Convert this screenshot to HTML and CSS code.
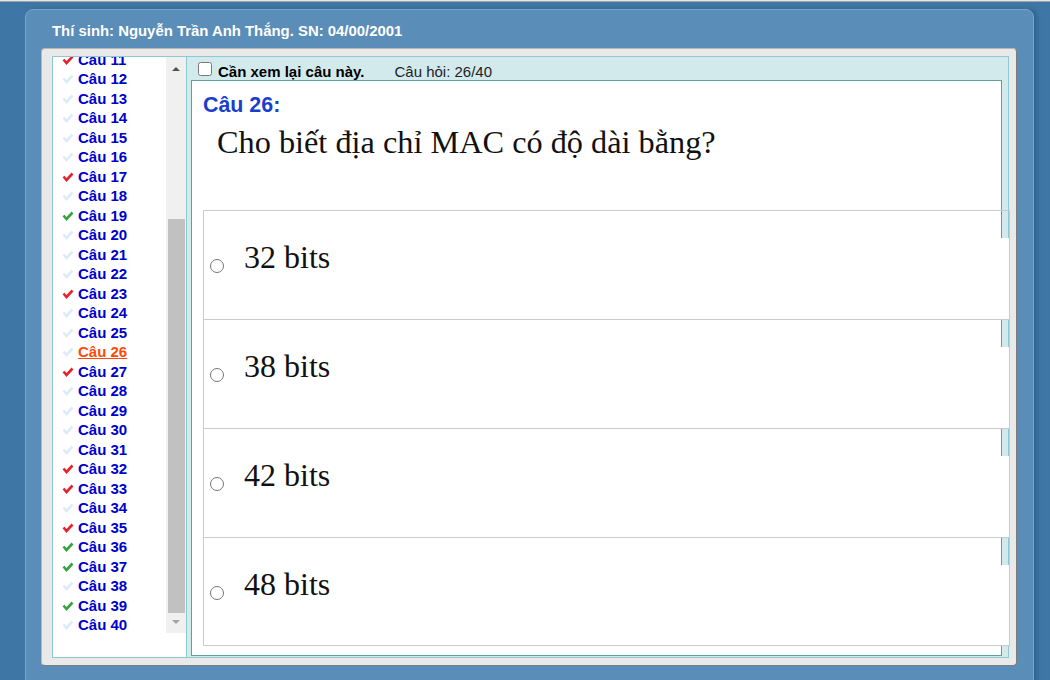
FILE: index.html
```html
<!DOCTYPE html>
<html lang="vi">
<head>
<meta charset="utf-8">
<title>Thi trắc nghiệm</title>
<link rel="stylesheet" href="styles.css">
</head>
<body>
<div class="topline"></div>
<div class="page">
  <div class="header">Thí sinh: Nguyễn Trần Anh Thắng. SN: 04/00/2001</div>
  <div class="frame">
    <div class="nav">
      <div class="nav-scroll">
        <div class="qlist-wrap">
          <ul class="qlist">
            <li class="q"><svg class="tick red" viewBox="0 0 12 10"><path d="M1.5 4.5 L4.5 8 L10.5 1.5"/></svg><a class="ql">Câu 11</a></li>
            <li class="q"><svg class="tick none" viewBox="0 0 12 10"><path d="M1.5 4.5 L4.5 8 L10.5 1.5"/></svg><a class="ql">Câu 12</a></li>
            <li class="q"><svg class="tick none" viewBox="0 0 12 10"><path d="M1.5 4.5 L4.5 8 L10.5 1.5"/></svg><a class="ql">Câu 13</a></li>
            <li class="q"><svg class="tick none" viewBox="0 0 12 10"><path d="M1.5 4.5 L4.5 8 L10.5 1.5"/></svg><a class="ql">Câu 14</a></li>
            <li class="q"><svg class="tick none" viewBox="0 0 12 10"><path d="M1.5 4.5 L4.5 8 L10.5 1.5"/></svg><a class="ql">Câu 15</a></li>
            <li class="q"><svg class="tick none" viewBox="0 0 12 10"><path d="M1.5 4.5 L4.5 8 L10.5 1.5"/></svg><a class="ql">Câu 16</a></li>
            <li class="q"><svg class="tick red" viewBox="0 0 12 10"><path d="M1.5 4.5 L4.5 8 L10.5 1.5"/></svg><a class="ql">Câu 17</a></li>
            <li class="q"><svg class="tick none" viewBox="0 0 12 10"><path d="M1.5 4.5 L4.5 8 L10.5 1.5"/></svg><a class="ql">Câu 18</a></li>
            <li class="q"><svg class="tick green" viewBox="0 0 12 10"><path d="M1.5 4.5 L4.5 8 L10.5 1.5"/></svg><a class="ql">Câu 19</a></li>
            <li class="q"><svg class="tick none" viewBox="0 0 12 10"><path d="M1.5 4.5 L4.5 8 L10.5 1.5"/></svg><a class="ql">Câu 20</a></li>
            <li class="q"><svg class="tick none" viewBox="0 0 12 10"><path d="M1.5 4.5 L4.5 8 L10.5 1.5"/></svg><a class="ql">Câu 21</a></li>
            <li class="q"><svg class="tick none" viewBox="0 0 12 10"><path d="M1.5 4.5 L4.5 8 L10.5 1.5"/></svg><a class="ql">Câu 22</a></li>
            <li class="q"><svg class="tick red" viewBox="0 0 12 10"><path d="M1.5 4.5 L4.5 8 L10.5 1.5"/></svg><a class="ql">Câu 23</a></li>
            <li class="q"><svg class="tick none" viewBox="0 0 12 10"><path d="M1.5 4.5 L4.5 8 L10.5 1.5"/></svg><a class="ql">Câu 24</a></li>
            <li class="q"><svg class="tick none" viewBox="0 0 12 10"><path d="M1.5 4.5 L4.5 8 L10.5 1.5"/></svg><a class="ql">Câu 25</a></li>
            <li class="q"><svg class="tick none" viewBox="0 0 12 10"><path d="M1.5 4.5 L4.5 8 L10.5 1.5"/></svg><a class="ql current">Câu 26</a></li>
            <li class="q"><svg class="tick red" viewBox="0 0 12 10"><path d="M1.5 4.5 L4.5 8 L10.5 1.5"/></svg><a class="ql">Câu 27</a></li>
            <li class="q"><svg class="tick none" viewBox="0 0 12 10"><path d="M1.5 4.5 L4.5 8 L10.5 1.5"/></svg><a class="ql">Câu 28</a></li>
            <li class="q"><svg class="tick none" viewBox="0 0 12 10"><path d="M1.5 4.5 L4.5 8 L10.5 1.5"/></svg><a class="ql">Câu 29</a></li>
            <li class="q"><svg class="tick none" viewBox="0 0 12 10"><path d="M1.5 4.5 L4.5 8 L10.5 1.5"/></svg><a class="ql">Câu 30</a></li>
            <li class="q"><svg class="tick none" viewBox="0 0 12 10"><path d="M1.5 4.5 L4.5 8 L10.5 1.5"/></svg><a class="ql">Câu 31</a></li>
            <li class="q"><svg class="tick red" viewBox="0 0 12 10"><path d="M1.5 4.5 L4.5 8 L10.5 1.5"/></svg><a class="ql">Câu 32</a></li>
            <li class="q"><svg class="tick red" viewBox="0 0 12 10"><path d="M1.5 4.5 L4.5 8 L10.5 1.5"/></svg><a class="ql">Câu 33</a></li>
            <li class="q"><svg class="tick none" viewBox="0 0 12 10"><path d="M1.5 4.5 L4.5 8 L10.5 1.5"/></svg><a class="ql">Câu 34</a></li>
            <li class="q"><svg class="tick red" viewBox="0 0 12 10"><path d="M1.5 4.5 L4.5 8 L10.5 1.5"/></svg><a class="ql">Câu 35</a></li>
            <li class="q"><svg class="tick green" viewBox="0 0 12 10"><path d="M1.5 4.5 L4.5 8 L10.5 1.5"/></svg><a class="ql">Câu 36</a></li>
            <li class="q"><svg class="tick green" viewBox="0 0 12 10"><path d="M1.5 4.5 L4.5 8 L10.5 1.5"/></svg><a class="ql">Câu 37</a></li>
            <li class="q"><svg class="tick none" viewBox="0 0 12 10"><path d="M1.5 4.5 L4.5 8 L10.5 1.5"/></svg><a class="ql">Câu 38</a></li>
            <li class="q"><svg class="tick green" viewBox="0 0 12 10"><path d="M1.5 4.5 L4.5 8 L10.5 1.5"/></svg><a class="ql">Câu 39</a></li>
            <li class="q"><svg class="tick none" viewBox="0 0 12 10"><path d="M1.5 4.5 L4.5 8 L10.5 1.5"/></svg><a class="ql">Câu 40</a></li>
          </ul>
        </div>
        <div class="sbar">
          <div class="sbtn up"><span class="arrow-up"></span></div>
          <div class="strack"><div class="sthumb"></div></div>
          <div class="sbtn down"><span class="arrow-down"></span></div>
        </div>
      </div>
    </div>
    <div class="main">
      <div class="toolbar">
        <input type="checkbox" class="review-box">
        <span class="review">Cần xem lại câu này.</span>
        <span class="counter">Câu hỏi: 26/40</span>
      </div>
      <div class="qbox">
        <div class="qtitle">Câu 26:</div>
        <div class="qtext">Cho biết địa chỉ MAC có độ dài bằng?</div>
        <div class="answers">
          <label class="ans"><input type="radio" name="ans" class="radio"><span class="atext">32 bits</span></label>
          <label class="ans"><input type="radio" name="ans" class="radio"><span class="atext">38 bits</span></label>
          <label class="ans"><input type="radio" name="ans" class="radio"><span class="atext">42 bits</span></label>
          <label class="ans last"><input type="radio" name="ans" class="radio"><span class="atext">48 bits</span></label>
        </div>
      </div>
    </div>
  </div>
</div>
</body>
</html>
```

FILE: styles.css
```css
html, body {
  margin: 0;
  padding: 0;
}
body {
  background: #3e77a5;
  font-family: "Liberation Sans", Arial, sans-serif;
  height: 680px;
  overflow: hidden;
}
.topline {
  height: 1px;
  background: #e6e6e6;
  border-bottom: 1px solid #9da3a8;
}
.page {
  margin: 7px 0 0 25px;
  width: 1009px;
  height: 700px;
  background: #5a8db8;
  border: 1px solid #7aa6cb;
  border-radius: 8px;
  padding: 13px 0 0 15px;
  box-sizing: border-box;
  box-shadow: 3px 0 4px rgba(20, 60, 100, 0.35);
}
.header {
  color: #fff;
  font-weight: bold;
  font-size: 14.9px;
  line-height: 17px;
  padding-left: 11px;
}
.frame {
  margin-top: 8px;
  width: 976px;
  box-sizing: border-box;
  background: #e9e9e9;
  border: 1px solid #b6b6b6;
  border-right-color: #7c7c7c;
  border-bottom-color: #7c7c7c;
  border-radius: 4px;
  padding: 7px 7px 7px 10px;
  display: flex;
}
.nav {
  width: 135px;
  height: 602px;
  box-sizing: border-box;
  border: 1px solid #8ec8d1;
  background: #fff;
}
.nav-scroll {
  height: 576px;
  display: flex;
}
.qlist-wrap {
  flex: 1;
  overflow: hidden;
}
.qlist {
  list-style: none;
  margin: -7.5px 0 0 0;
  padding: 0;
}
.q {
  height: 19.5px;
  display: flex;
  align-items: center;
}
.tick {
  width: 12px;
  height: 10px;
  margin: 1px 4px 0 9px;
  flex: none;
}
.tick path {
  fill: none;
  stroke: currentColor;
  stroke-width: 2.6;
  stroke-linecap: butt;
  stroke-linejoin: miter;
}
.tick.red { color: #e6222c; }
.tick.green { color: #33a33c; }
.tick.none { color: #dcecf6; }
.ql {
  color: #0000cd;
  font-weight: bold;
  font-size: 15px;
  line-height: 19.5px;
  text-decoration: none;
}
.ql.current {
  color: #ff4a0a;
  text-decoration: underline;
}
.sbar {
  width: 20px;
  background: #f0f0f0;
  display: flex;
  flex-direction: column;
}
.sbtn {
  height: 20px;
  display: flex;
  justify-content: center;
  align-items: flex-start;
  box-sizing: border-box;
}
.sbtn.up { padding-top: 10px; }
.sbtn.down { padding-top: 7px; }
.arrow-up {
  width: 0;
  height: 0;
  border-left: 4px solid transparent;
  border-right: 4px solid transparent;
  border-bottom: 4px solid #505050;
}
.arrow-down {
  width: 0;
  height: 0;
  border-left: 4px solid transparent;
  border-right: 4px solid transparent;
  border-top: 4px solid #a3a3a3;
}
.strack {
  flex: 1;
}
.sthumb {
  margin: 142px 1px 0 2px;
  height: 394px;
  background: #c1c1c1;
}
.main {
  width: 822px;
  height: 602px;
  box-sizing: border-box;
  background: #d3eaed;
  border: 1px solid #8ec8d1;
  border-left: none;
  padding: 0 6px 0 4px;
}
.toolbar {
  height: 23px;
  display: flex;
  align-items: flex-start;
  padding: 4px 0 0 7px;
  box-sizing: border-box;
}
.review-box {
  width: 14px;
  height: 14px;
  margin: 1px 6px 0 0;
}
.review {
  margin-top: 2px;
  font-weight: bold;
  font-size: 15px;
  line-height: 17px;
  color: #000;
}
.counter {
  margin: 2px 0 0 30px;
  font-size: 15px;
  line-height: 17px;
  color: #222;
}
.qbox {
  width: 811px;
  height: 576px;
  box-sizing: border-box;
  background: #fff;
  border: 1px solid #5f9ea1;
  padding: 12px 0 0 11px;
}
.qtitle {
  color: #1b3fcc;
  font-weight: bold;
  font-size: 21.4px;
  line-height: 24px;
}
.qtext {
  font-family: "Liberation Serif", "Times New Roman", serif;
  font-size: 32.3px;
  line-height: 36px;
  color: #111;
  margin: 7px 0 50px 14px;
}
.ans {
  display: flex;
  align-items: flex-start;
  width: 807px;
  height: 109px;
  box-sizing: border-box;
  border: 1px solid #cacaca;
  border-bottom: none;
  background: linear-gradient(to bottom, transparent 27px, #fff 27px);
}
.ans.last {
  border-bottom: 1px solid #cacaca;
}
.radio {
  width: 14px;
  height: 14px;
  margin: 48px 0 0 6px;
  flex: none;
}
.atext {
  font-family: "Liberation Serif", "Times New Roman", serif;
  font-size: 32px;
  line-height: 36px;
  color: #111;
  margin: 28px 0 0 20px;
}
```
